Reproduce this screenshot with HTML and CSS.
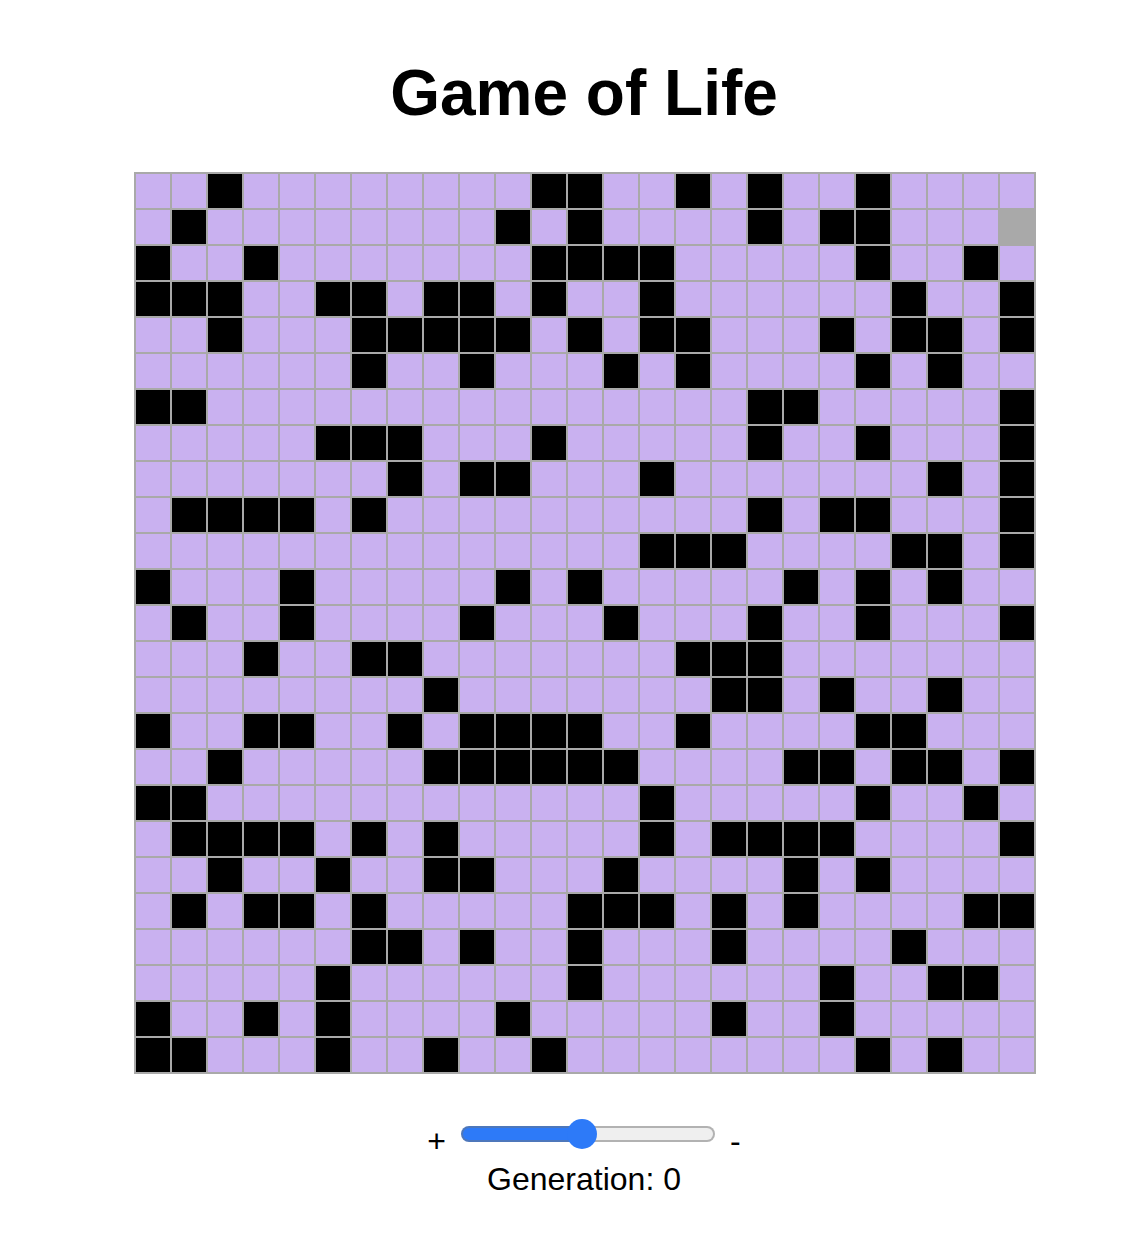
FILE: index.html
```html
<!DOCTYPE html>
<html lang="en">
<head>
  <meta charset="utf-8">
  <meta name="viewport" content="width=device-width, initial-scale=1">
  <title>Game of Life</title>
  <link rel="stylesheet" href="styles.css">
</head>
<body>
  <main class="game">
    <h1 class="title">Game of Life</h1>
    <div class="board" id="board" role="group" aria-label="Cells"></div>
    <div class="speed">
      <span>+</span>
      <input class="slider" id="speed" type="range" min="0" max="1000" value="482" aria-label="Speed">
      <span>-</span>
    </div>
    <p class="generation">Generation: 0</p>
  </main>
  <script src="script.js"></script>
</body>
</html>
```
FILE: styles.css
```css
* {
  box-sizing: border-box;
}

body {
  margin: 0;
  padding: 57px 24px 48px 54px;
  background: #fff;
  color: #000;
  font-family: Helvetica, "Liberation Sans", Arial, sans-serif;
  font-size: 32px;
  line-height: 40px;
}

.game {
  display: flex;
  flex-direction: column;
  align-items: center;
  max-width: 900px;
  margin: 0 auto;
}

.title {
  margin: 0 0 43px;
  font-size: 64px;
  line-height: 72px;
}

/* The closing grid line sits outside the 25 cells. */
.board {
  display: grid;
  align-self: flex-start;
  grid-template-columns: repeat(25, 1fr);
  gap: 2px;
  width: calc(100% + 2px);
  padding: 2px;
  background: #a9a9a9;
}

.cell {
  aspect-ratio: 1;
  min-width: 0;
  margin: 0;
  padding: 0;
  border: 0;
  border-radius: 0;
  background: #c9b1f0;
}

.cell.alive {
  background: #000;
}

.cell.active,
.cell:hover {
  background: #a9a9a9;
}

.speed {
  display: flex;
  align-items: flex-start;
  gap: 15px;
  margin-top: 45px;
}

.speed span {
  padding-top: 4px;
  line-height: 36px;
}

.slider {
  --fill: 48%;
  appearance: none;
  width: 254px;
  height: 30px;
  margin: 0;
  background: none;
}

.slider::-webkit-slider-runnable-track {
  height: 16px;
  border: 2px solid transparent;
  border-radius: 8px;
  background:
    linear-gradient(to right, #2d7af8 var(--fill), #efefef var(--fill)) padding-box,
    linear-gradient(to right, #4d77bb var(--fill), #b2b2b2 var(--fill)) border-box;
}

.slider::-webkit-slider-thumb {
  appearance: none;
  width: 30px;
  height: 30px;
  margin: -9px -2px 0;
  border: 0;
  border-radius: 50%;
  background: #2d7af8;
}

.generation {
  margin: 0;
}
```
FILE: script.js
```js
// One string per row: "#" is a live cell, "o" the active one.
const rows = [
  "..#........##..#.#..#....",
  ".#........#.#....#.##...o",
  "#..#.......####.....#..#.",
  "###..##.##.#..#......#..#",
  "..#...#####.#.##...#.##.#",
  "......#..#...#.#....#.#..",
  "##...............##.....#",
  ".....###...#.....#..#...#",
  ".......#.##...#.......#.#",
  ".####.#..........#.##...#",
  "..............###....##.#",
  "#...#.....#.#.....#.#.#..",
  ".#..#....#...#...#..#...#",
  "...#..##.......###.......",
  "........#.......##.#..#..",
  "#..##..#.####..#....##...",
  "..#.....######....##.##.#",
  "##............#.....#..#.",
  ".####.#.#.....#.####....#",
  "..#..#..##...#....#.#....",
  ".#.##.#.....###.#.#....##",
  "......##.#..#...#....#...",
  ".....#......#......#..##.",
  "#..#.#....#.....#..#.....",
  "##...#..#..#........#.#.."
];

const board = document.getElementById("board");

rows.forEach((row, y) => {
  [...row].forEach((mark, x) => {
    const cell = document.createElement("button");
    cell.type = "button";
    cell.className = "cell";
    cell.setAttribute("aria-label", `Row ${y + 1}, column ${x + 1}`);
    cell.classList.toggle("alive", mark === "#");
    cell.classList.toggle("active", mark === "o");
    cell.addEventListener("click", () => {
      cell.classList.remove("active");
      cell.classList.toggle("alive");
    });
    board.append(cell);
  });
});

const speed = document.getElementById("speed");
speed.addEventListener("input", () => {
  speed.style.setProperty("--fill", `${speed.value / 10}%`);
});
```
